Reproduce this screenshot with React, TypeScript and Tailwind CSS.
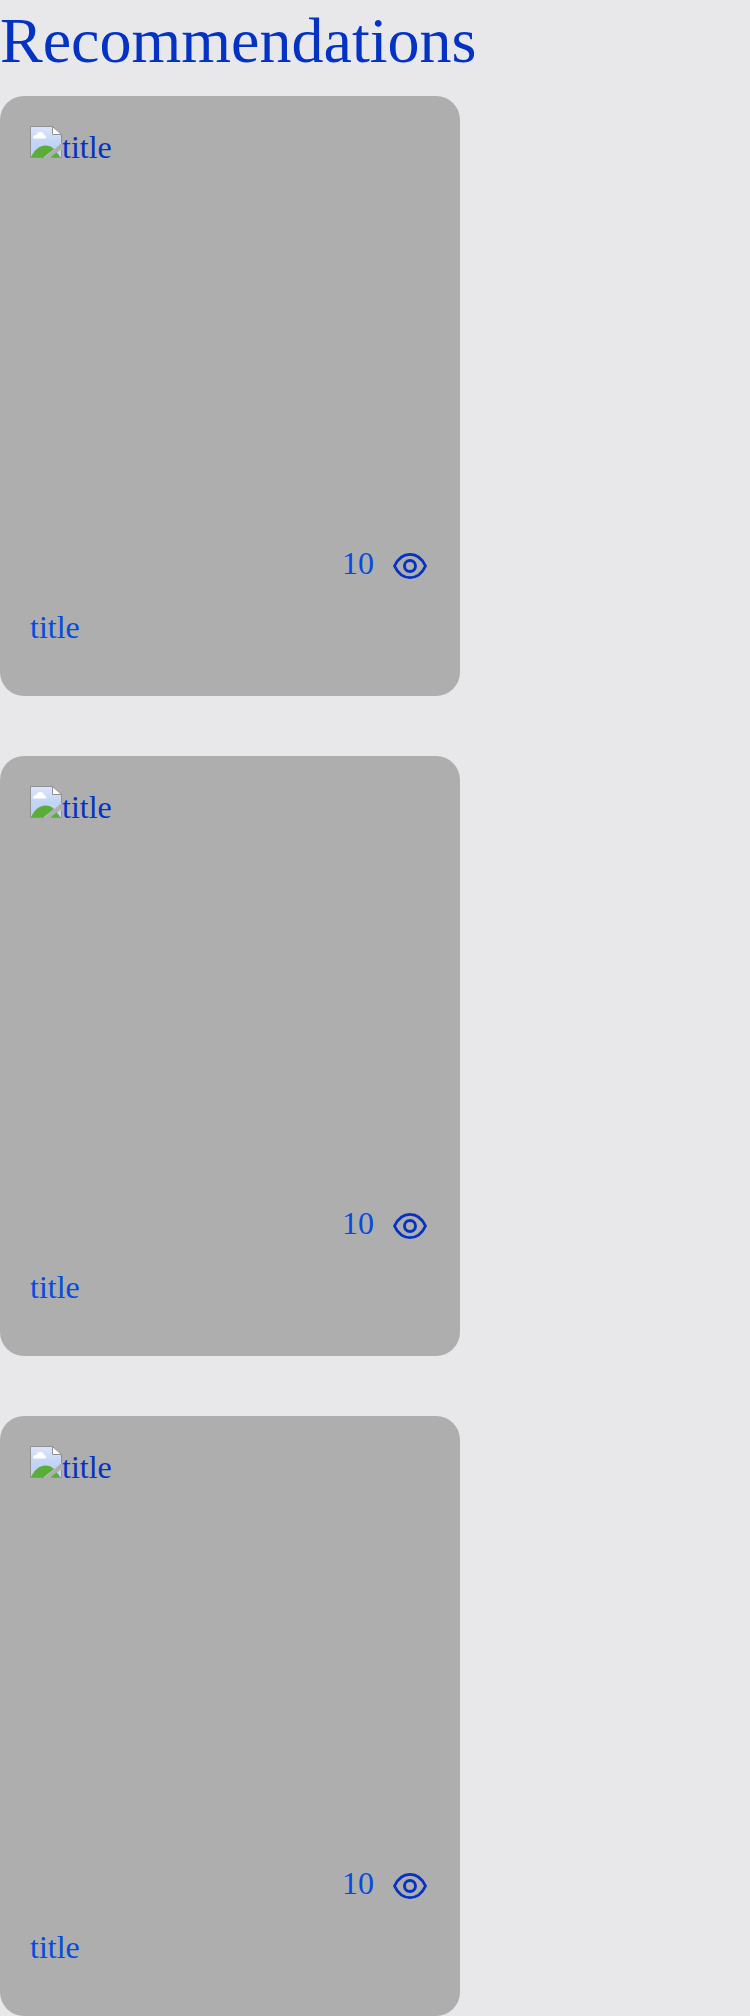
import React from "react";

function BrokenImage() {
  return (
    <svg width="32" height="32" viewBox="0 0 32 32" className="block shrink-0">
      <defs>
        <linearGradient id="sky" x1="0" y1="0" x2="0" y2="1">
          <stop offset="0" stopColor="#dde6fb" />
          <stop offset="0.5" stopColor="#c3d5f5" />
          <stop offset="1" stopColor="#bdd0f2" />
        </linearGradient>
      </defs>
      <path d="M0.5 0.5H22.5L31.5 8.5V17L14.5 31.5H0.5Z" fill="url(#sky)" />
      <path d="M21 31.5L31.5 23V31.5Z" fill="#c3d5f5" />
      <path d="M3 12.5C2.6 10 4.5 8.8 6.5 9C7 6.5 9 5.5 11 6C13 6.3 13.8 7.5 14 9C16 9.5 16.5 11 15.8 12.5Z" fill="#fff" />
      <path d="M1 31C5 23 10 19.5 15.5 19.5C19 19.5 21.5 20.5 24 23L14 31Z" fill="#5aad38" />
      <path d="M21 31L26.5 26.5C28 28 29.3 29.4 30 31Z" fill="#5aad38" />
      <path d="M22.5 0.5V8.5H31.5Z" fill="#fff" />
      <path d="M14 31.5H0.5V0.5H22.5L31.5 8.5V17M22.5 0.5V8.5H31.5M31.5 24V31.5H21" fill="none" stroke="#919191" />
    </svg>
  );
}

function Eye() {
  return (
    <svg width="40" height="40" viewBox="0 0 40 40" fill="none" stroke="#0433c4" strokeWidth="2.9">
      <circle cx="20" cy="20" r="5.5" />
      <path d="M4.5 20C7.5 13.5 13 8.4 20 8.4S32.5 13.5 35.5 20C32.5 26.5 27 31.6 20 31.6S7.5 26.5 4.5 20Z" strokeLinejoin="round" />
    </svg>
  );
}

function Card() {
  return (
    <article className="flex h-[600px] w-[460px] flex-col rounded-3xl bg-[#aeaeae] p-[30px] text-[32px] leading-[37px]">
      <div className="flex h-[419px] items-start">
        <BrokenImage />
        <span className="mt-[3px]">title</span>
      </div>
      <div className="flex h-[50px] items-start justify-end gap-4 text-[#044be0]">
        <span>10</span>
        <span className="pt-px">
          <Eye />
        </span>
      </div>
      <p className="mt-[14px] text-[#044be0]">title</p>
    </article>
  );
}

export default function App() {
  return (
    <main className="h-[2016px] bg-[#e8e8ea] font-['Liberation_Serif',serif] text-[#0433c4]">
      <h1 className="h-24 pt-1 text-[64px] leading-[74px]">Recommendations</h1>
      <section className="flex flex-col gap-[60px]">
        <Card />
        <Card />
        <Card />
      </section>
    </main>
  );
}
